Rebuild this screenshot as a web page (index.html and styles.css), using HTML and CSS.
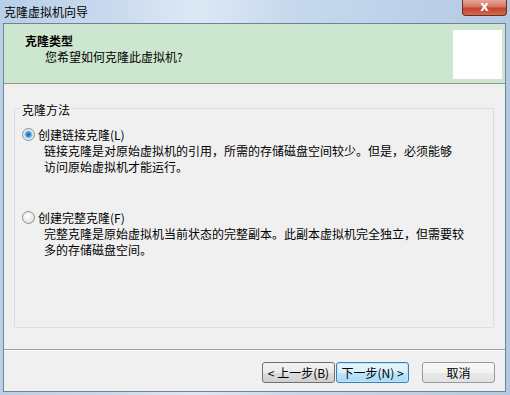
FILE: index.html
```html
<!DOCTYPE html>
<html lang="zh-CN">
<head>
    <meta charset="UTF-8">
    <title>克隆虚拟机向导</title>
    <link rel="stylesheet" href="styles.css">
</head>
<body>
    <div class="window">
        <div class="titlebar">
            <span class="title">克隆虚拟机向导</span>
            <span class="close">X</span>
        </div>
        <div class="client">
            <div class="header">
                <div class="header-text">
                    <div class="step">克隆类型</div>
                    <div class="question">您希望如何克隆此虚拟机?</div>
                </div>
                <div class="logo-box"></div>
            </div>

            <div class="content">
                <fieldset class="group">
                    <legend>克隆方法</legend>

                    <div class="option first">
                        <div class="radio-row">
                            <span class="radio checked"></span>
                            <span>创建链接克隆(L)</span>
                        </div>
                        <div class="desc">链接克隆是对原始虚拟机的引用，所需的存储磁盘空间较少。但是，必须能够<br>访问原始虚拟机才能运行。</div>
                    </div>

                    <div class="option second">
                        <div class="radio-row">
                            <span class="radio"></span>
                            <span>创建完整克隆(F)</span>
                        </div>
                        <div class="desc">完整克隆是原始虚拟机当前状态的完整副本。此副本虚拟机完全独立，但需要较<br>多的存储磁盘空间。</div>
                    </div>
                </fieldset>
            </div>

            <div class="separator"></div>

            <div class="footer">
                <button class="btn">&lt; 上一步(B)</button>
                <button class="btn default">下一步(N) &gt;</button>
                <button class="btn cancel">取消</button>
            </div>
        </div>
    </div>
</body>
</html>
```

FILE: styles.css
```css
body {
    margin: 0;
    font-family: "Noto Sans CJK SC", "Liberation Sans", sans-serif;
    font-size: 12px;
    color: #000;
}
.window {
    width: 510px;
    height: 395px;
    display: flex;
    flex-direction: column;
    background: linear-gradient(to right, #b9cfe8 0%, #c9daee 22%, #dde8f5 38%, #c6d8ed 58%, #b3cae4 100%);
    overflow: hidden;
}
.titlebar {
    height: 23px;
    display: flex;
    justify-content: space-between;
    align-items: flex-start;
}
.title {
    padding-left: 4px;
    line-height: 23px;
}
.close {
    width: 43px;
    height: 15px;
    margin-right: 3px;
    border: 1px solid #6e2b22;
    border-top: none;
    border-radius: 0 0 4px 4px;
    background: linear-gradient(to bottom, #e6a898 0%, #d47560 45%, #c2442c 55%, #cf6a4e 100%);
    color: #fff;
    font-family: "DejaVu Sans", sans-serif;
    font-weight: bold;
    font-size: 11px;
    line-height: 15px;
    text-align: center;
}
.client {
    flex: 1;
    margin: 0 4px 3px 3px;
    border: 1px solid #6f8296;
    background: #f0f0f0;
    display: flex;
    flex-direction: column;
}
.header {
    height: 59px;
    background: #cde6cf;
    border-bottom: 1px solid #8a978e;
    display: flex;
    justify-content: space-between;
}
.header-text {
    padding: 9px 0 0 21px;
    line-height: 16px;
}
.step {
    font-weight: bold;
}
.question {
    padding-left: 20px;
}
.logo-box {
    width: 49px;
    height: 49px;
    margin: 6px 3px 0 0;
    background: #fff;
}
.content {
    flex: 1;
    display: flex;
    flex-direction: column;
    padding: 14px 11px 21px 10px;
}
.group {
    flex: 1;
    margin: 0;
    padding: 0 7px;
    border: 1px solid #d5dfe5;
    border-radius: 2px;
}
.group legend {
    padding: 4px 1px 0;
    line-height: 16px;
    margin-left: -1px;
}
.option.first {
    margin-top: 7px;
}
.option.second {
    margin-top: 33px;
}
.radio-row {
    height: 18px;
    display: flex;
    align-items: center;
    gap: 3px;
}
.radio {
    width: 11px;
    height: 11px;
    border: 1px solid #8e8f8f;
    border-radius: 50%;
    background: radial-gradient(circle at 40% 40%, #ffffff 0, #e4e4e4 70%, #d2d2d2 100%);
}
.radio.checked {
    background: radial-gradient(circle, #1f5f9e 0, #3b8fd0 2px, #8cc6ef 3.5px, #e8eef4 4.5px, #d8dde2 100%);
}
.desc {
    padding-left: 22px;
    line-height: 16px;
}
.separator {
    height: 1px;
    background: #a0a0a0;
    border-bottom: 1px solid #fff;
}
.footer {
    height: 40px;
    display: flex;
    justify-content: flex-end;
    align-items: flex-start;
    padding: 11px 10px 0 0;
    box-sizing: border-box;
}
.btn {
    width: 73px;
    height: 21px;
    padding: 0;
    font-family: inherit;
    font-size: 12px;
    color: #000;
    border: 1px solid #707070;
    border-radius: 3px;
    background: linear-gradient(to bottom, #f2f2f2 0%, #ebebeb 50%, #dddddd 51%, #cfcfcf 100%);
}
.btn.default {
    margin-left: 1px;
    border-color: #3c7fb1;
    background: linear-gradient(to bottom, #eaf6fd 0%, #d9f0fc 50%, #bee6fd 51%, #a7d9f5 100%);
    box-shadow: inset 0 0 0 1px #bfe8fb;
}
.btn.cancel {
    margin-left: 13px;
    border-color: #9a9a9a;
    background: linear-gradient(to bottom, #f8f8f8 0%, #f3f3f3 50%, #e9e9e9 51%, #e1e1e1 100%);
}
```
